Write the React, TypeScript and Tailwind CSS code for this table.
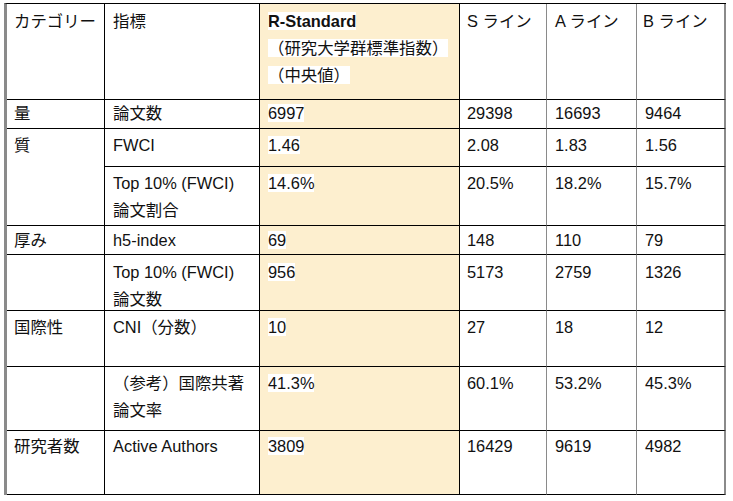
const rows: {
  pt: string;
  cat?: string;
  catSpan?: boolean;
  skipCat?: boolean;
  metric: string[];
  vals: string[];
}[] = [
  { pt: "pt-0", cat: "量", metric: ["論文数"], vals: ["6997", "29398", "16693", "9464"] },
  { pt: "pt-[3px]", cat: "質", catSpan: true, metric: ["FWCI"], vals: ["1.46", "2.08", "1.83", "1.56"] },
  { pt: "pt-[3px]", skipCat: true, metric: ["Top 10% (FWCI)", "論文割合"], vals: ["14.6%", "20.5%", "18.2%", "15.7%"] },
  { pt: "pt-[1px]", cat: "厚み", metric: ["h5-index"], vals: ["69", "148", "110", "79"] },
  { pt: "pt-[4px]", cat: "", metric: ["Top 10% (FWCI)", "論文数"], vals: ["956", "5173", "2759", "1326"] },
  { pt: "pt-[3px]", cat: "国際性", metric: ["CNI（分数）"], vals: ["10", "27", "18", "12"] },
  { pt: "pt-[3px]", cat: "", metric: ["（参考）国際共著", "論文率"], vals: ["41.3%", "60.1%", "53.2%", "45.3%"] },
  { pt: "pt-[2px]", cat: "研究者数", metric: ["Active Authors"], vals: ["3809", "16429", "9619", "4982"] },
];

function Lines({ lines }: { lines: string[] }) {
  return (
    <>
      {lines.map((l, i) => (
        <div key={i}>{l}</div>
      ))}
    </>
  );
}

export default function App() {
  return (
    <div className="min-h-screen bg-white pl-[4px] pt-[3px]">
      <div
        className="inline-grid grid-cols-[98px_155px_200px_87px_90px_89px] grid-rows-[96px_29px_38px_59px_29px_56px_56px_64px_64px] border-t border-t-black border-l-[3px] border-l-[#8a8a8a] text-[16.4px] leading-[27px] text-[#111]"
        style={{ fontFamily: '"Liberation Sans", "Noto Sans CJK JP", sans-serif' }}
      >
        {/* header */}
        <div className="border-b border-r border-black pl-[7px] pt-[4px]">カテゴリー</div>
        <div className="border-b border-r border-black pl-[8px] pt-[4px]">指標</div>
        <div className="border-b border-r border-black bg-[#fdefcf] pl-[8px] pt-[4px]">
          <div>
            <span className="bg-white font-bold">R-Standard</span>
          </div>
          <div>
            <span className="bg-white">（研究大学群標準指数）</span>
          </div>
          <div>
            <span className="bg-white">（中央値）</span>
          </div>
        </div>
        <div className="border-b border-b-black border-r border-r-[#8a8a8a] pl-[7px] pt-[4px]">S ライン</div>
        <div className="border-b border-b-black border-r border-r-[#8a8a8a] pl-[8px] pt-[4px]">A ライン</div>
        <div className="border-b border-b-black border-r-2 border-r-[#8a8a8a] pl-[6px] pt-[4px]">B ライン</div>

        {rows.map((r, i) => (
          <div key={i} className="contents">
            {!r.skipCat && (
              <div className={`${r.catSpan ? "row-span-2" : ""} border-b border-r border-black pl-[7px] ${r.pt}`}>
                {r.cat}
              </div>
            )}
            <div className={`border-b border-r border-black pl-[8px] ${r.pt}`}>
              <Lines lines={r.metric} />
            </div>
            <div className={`border-b border-r border-black bg-[#fdefcf] pl-[8px] ${r.pt}`}>
              <span className="bg-white">{r.vals[0]}</span>
            </div>
            <div className={`border-b border-b-black border-r border-r-[#8a8a8a] pl-[7px] ${r.pt}`}>{r.vals[1]}</div>
            <div className={`border-b border-b-black border-r border-r-[#8a8a8a] pl-[8px] ${r.pt}`}>{r.vals[2]}</div>
            <div className={`border-b border-b-black border-r-2 border-r-[#8a8a8a] pl-[8px] ${r.pt}`}>{r.vals[3]}</div>
          </div>
        ))}
      </div>
    </div>
  );
}
